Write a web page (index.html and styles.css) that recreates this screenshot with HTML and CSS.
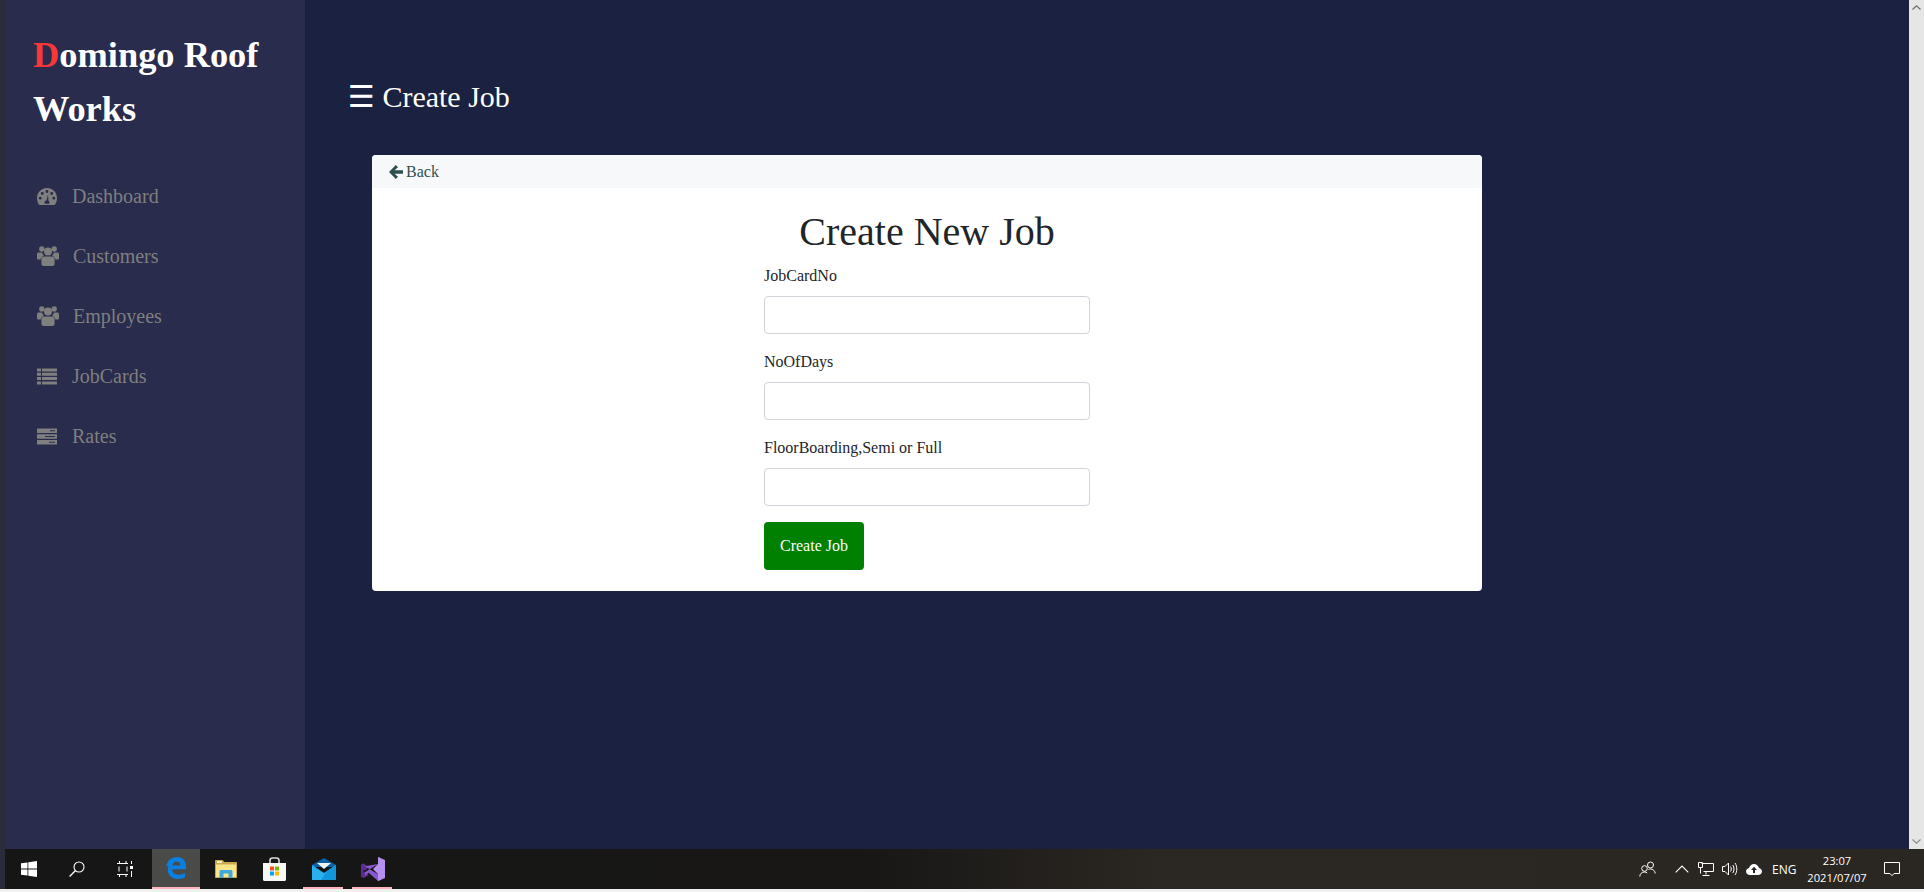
FILE: index.html
```html
<!DOCTYPE html>
<html lang="en">
<head>
<meta charset="utf-8">
<title>Create Job</title>
<link rel="stylesheet" href="styles.css">
</head>
<body>
<div class="screen">
  <div class="edge"></div>
  <div class="window">
    <div class="app">
      <aside class="sidebar">
        <h3 class="brand"><span class="brand-d">D</span>omingo Roof Works</h3>
        <ul class="nav">
          <li class="nav-item"><svg class="nav-icon" viewBox="0 0 20 17"><path fill-rule="evenodd" d="M10 0C4.500 0 0 4.400 0 10c0 2.600.8 5 1.900 6.500.2.300.5.500.9.500h14.400c.4 0 .7-.2.900-.5C19.200 15 20 12.600 20 10c0-5.600-4.500-10-10-10zM10 2a1.400 1.400 0 1 1 0 2.900A1.400 1.400 0 0 1 10 2zM5.300 4a1.400 1.400 0 1 1 0 2.900 1.400 1.400 0 0 1 0-2.900zm9.400 0a1.400 1.400 0 1 1 0 2.900 1.400 1.400 0 0 1 0-2.900zM3.200 8.700a1.400 1.400 0 1 1 0 2.900 1.400 1.400 0 0 1 0-2.900zm13.600 0a1.400 1.400 0 1 1 0 2.900 1.400 1.400 0 0 1 0-2.900zM11 6.500l.5 6.200c.7.400 1 1 1 1.700 0 .5-.2 1-.5 1.300H8c-.3-.3-.5-.8-.5-1.300 0-1.100.9-2 2-2z"/></svg><span class="nav-label">Dashboard</span></li>
          <li class="nav-item"><svg class="nav-icon nav-icon-users" viewBox="0 0 22 20"><circle cx="4.800" cy="3" r="2.700"/><circle cx="17.200" cy="3" r="2.700"/><circle cx="11" cy="5.600" r="4"/><path d="M0 8.200c0-1 .7-1.700 1.800-1.700H5c.3 1.300 1 2.400 2 3.200-1.800.6-3 2-3.400 3.800H1.500C.5 13.500 0 13 0 12zM22 8.200c0-1-.7-1.700-1.800-1.700H17c-.3 1.300-1 2.400-2 3.200 1.800.6 3 2 3.400 3.800h2.100c1 0 1.500-.5 1.500-1.500zM7 10.600h8c1.500 0 2.600 1.200 2.600 2.800v4.400c0 1.300-.8 2.200-2 2.200H6.400c-1.200 0-2-.9-2-2.200v-4.400c0-1.600 1.100-2.800 2.600-2.800z"/></svg><span class="nav-label">Customers</span></li>
          <li class="nav-item"><svg class="nav-icon nav-icon-users" viewBox="0 0 22 20"><circle cx="4.800" cy="3" r="2.700"/><circle cx="17.200" cy="3" r="2.700"/><circle cx="11" cy="5.600" r="4"/><path d="M0 8.200c0-1 .7-1.700 1.800-1.700H5c.3 1.300 1 2.400 2 3.200-1.800.6-3 2-3.400 3.800H1.500C.5 13.500 0 13 0 12zM22 8.200c0-1-.7-1.700-1.800-1.700H17c-.3 1.300-1 2.400-2 3.200 1.800.6 3 2 3.400 3.800h2.100c1 0 1.500-.5 1.500-1.500zM7 10.600h8c1.500 0 2.600 1.200 2.600 2.800v4.400c0 1.300-.8 2.200-2 2.200H6.400c-1.200 0-2-.9-2-2.200v-4.400c0-1.600 1.100-2.800 2.600-2.800z"/></svg><span class="nav-label">Employees</span></li>
          <li class="nav-item"><svg class="nav-icon" viewBox="0 0 20 16"><path d="M0 0h4v3H0zM5 0h15v3H5zM0 4.300h4v3H0zM5 4.300h15v3H5zM0 8.600h4v3H0zM5 8.600h15v3H5zM0 12.900h4V16H0zM5 12.900h15V16H5z"/></svg><span class="nav-label">JobCards</span></li>
          <li class="nav-item"><svg class="nav-icon" viewBox="0 0 20 16"><path fill-rule="evenodd" d="M0 0h20v4.500H0zM13 1.700v1h5v-1zM0 5.700h20v4.500H0zM8 7.400v1h10v-1zM0 11.500h20V16H0zM12 13.200v1h6v-1z"/></svg><span class="nav-label">Rates</span></li>
        </ul>
      </aside>
      <main class="main">
        <h2 class="page-title"><span class="menu-glyph">☰</span> Create Job</h2>
        <section class="card">
          <div class="card-header"><svg class="back-icon" viewBox="0 0 14 14"><path d="M6.800 0 9 2.200 5.600 5.300H14v3.400H5.600L9 11.800 6.800 14 0 7z"/></svg><span>Back</span></div>
          <form class="card-body">
            <h1 class="form-title">Create New Job</h1>
            <div class="field"><label class="field-label">JobCardNo</label><input class="field-input" type="text"></div>
            <div class="field"><label class="field-label">NoOfDays</label><input class="field-input" type="text"></div>
            <div class="field"><label class="field-label">FloorBoarding,Semi or Full</label><input class="field-input" type="text"></div>
            <button class="submit" type="button">Create Job</button>
          </form>
        </section>
      </main>
      <div class="scrollbar">
        <svg class="scroll-arrow" viewBox="0 0 9 5"><path d="M.5 4.500 4.500.8l4 3.700" fill="none" stroke="#6f6f6f" stroke-width="1.200"/></svg>
        <svg class="scroll-arrow" viewBox="0 0 9 5"><path d="M.5.500 4.500 4.200l4-3.700" fill="none" stroke="#8c8c8c" stroke-width="1.200"/></svg>
      </div>
    </div>
    <footer class="taskbar">
      <div class="sys-btn"><svg class="tb-icon" viewBox="0 0 16 16"><path fill="#fff" d="M0 2.300 6.500 1.400v6.200H0zM7.300 1.300 16 0v7.600H7.300zM0 8.400h6.500v6.200L0 13.700zM7.300 8.400H16V16l-8.700-1.300z"/></svg></div>
      <div class="sys-btn"><svg class="tb-icon" viewBox="0 0 16 16"><circle cx="10" cy="6" r="5" fill="none" stroke="#fff" stroke-width="1.100"/><path d="M6.500 9.500.6 15.500" stroke="#fff" stroke-width="1.300"/></svg></div>
      <div class="sys-btn sys-btn-last"><svg class="tb-icon" viewBox="0 0 16 16"><path d="M0 2.500h11M0 13.500h11" fill="none" stroke="#fff"/><path d="M2.500 0v2.500M9 0v2.500M2.500 13.500V16M9 13.500V16M2 5.500v5M10 5.500v5" stroke="#fff" fill="none"/><path fill="#fff" d="M13 5h3v3h-3zM14 0h1v3h-1zM14 10h1v6h-1z"/></svg></div>
      <div class="pin pin-active"><svg class="pin-icon pin-icon-edge" viewBox="0 0 20 22"><path fill="#0a7fe0" d="M.3 9.200C1.200 3.600 5.400 0 11 0c5.600 0 9 3.800 9 9.700v2.600H6.200c.1 3.600 2.800 5.400 6.200 5.400 2.500 0 4.800-.7 6.600-1.900v4.500c-1.700 1-4.600 1.700-7.300 1.700C5.400 22 1.800 17.800 1.800 12.800c0-1.400.2-2.500.7-3.500C1.700 9.400 1 9.300.3 9.200zM6.400 8.600h8c0-2.500-1.500-4.200-3.800-4.200-2.200 0-3.800 1.800-4.200 4.200z"/></svg></div>
      <div class="pin"><svg class="pin-icon pin-icon-folder" viewBox="0 0 22 18"><path fill="#c9a94e" d="M0 1c0-.6.400-1 1-1h6.500l2 2H21c.6 0 1 .4 1 1v14c0 .6-.4 1-1 1H1c-.6 0-1-.4-1-1z"/><path fill="#fde58a" d="M1 4.500h20V17H1z"/><path fill="#f6f0cf" d="M2 1h5v2H2z"/><path fill="#3fa9dc" d="M4.500 18v-6.500c0-.8.500-1.500 1.500-1.500h10c1 0 1.500.7 1.500 1.500V18h-4v-4.500h-5V18z"/></svg></div>
      <div class="pin"><svg class="pin-icon pin-icon-store" viewBox="0 0 23 24"><path fill="none" stroke="#d8d8d8" stroke-width="1.600" d="M7 8V3.500C7 2 8 1 9.500 1h4C15 1 16 2 16 3.500V8"/><path fill="#f7f7f7" d="M0 6h23v16.500c0 .9-.6 1.500-1.500 1.500h-20C.6 24 0 23.400 0 22.500z"/><path fill="#f25022" d="M7 9.500h4v4H7z"/><path fill="#7fba00" d="M12 9.500h4v4h-4z"/><path fill="#00a4ef" d="M7 14.500h4v4H7z"/><path fill="#ffb900" d="M12 14.500h4v4h-4z"/></svg></div>
      <div class="pin pin-open"><svg class="pin-icon pin-icon-mail" viewBox="0 0 24 22"><path fill="#0a62a8" d="M12 0 24 7v2H0V7z"/><path fill="#f2f2f2" d="M5 5h14l-7 6z"/><path fill="#29b1ef" d="M0 7 12 15 24 7v15H0z"/><path fill="#1295db" d="M24 22H9L15 13l9-6z"/></svg></div>
      <div class="pin pin-open"><svg class="pin-icon pin-icon-vs" viewBox="0 0 24 24"><path fill="#5c2d91" d="M0 7.500 2.500 6.300l5.200 3.900-3.800 3.600-1.400-1.300v3.300l1.400-1.200 3.800 3.700-5.200 2.800L0 19.800z"/><path fill="#8758cf" d="M17 0l3 1.300V22.700L17 24 7.700 15.700 3.900 18.800 3.900 15.300 17 7V0zM3.900 9.300l13.100 8V7z"/><path fill="#b78fee" d="M17 0l7 3v18l-7 3V17l-5-5 5-5z"/></svg></div>
      <div class="tray">
        <svg class="tray-people" viewBox="0 0 17 16"><circle cx="11.500" cy="4" r="3" fill="none" stroke="#fff"/><circle cx="5.500" cy="7.500" r="2.800" fill="none" stroke="#fff"/><path d="M.8 15.500c0-2.500 2-4.500 4.700-4.500 1 0 2 .3 2.700 1M9.500 8.500c.6-.3 1.300-.5 2-.5 2.500 0 4.700 2 4.700 4.500" fill="none" stroke="#fff"/></svg>
        <svg class="tray-chevron" viewBox="0 0 14 8"><path d="M.7 7.300 7 1l6.300 6.300" fill="none" stroke="#fff" stroke-width="1.100"/></svg>
        <svg class="tray-net" viewBox="0 0 16 14"><path d="M3.500 1.500h12v8H5.500M8 9.500v3M4.500 13.500h7" fill="none" stroke="#fff"/><path d="M.5.500h4v5h-4zM2.500 5.500v6" fill="none" stroke="#fff"/></svg>
        <svg class="tray-vol" viewBox="0 0 16 14"><path d="M.5 4.500h2.500L6.500 1v12L3 9.500H.5z" fill="none" stroke="#fff"/><path d="M8.500 4.500c1 1.500 1 3.500 0 5M10.800 3c1.600 2.400 1.600 5.600 0 8M13 1c2.400 3.600 2.400 8.400 0 12" fill="none" stroke="#fff"/></svg>
        <svg class="tray-cloud" viewBox="0 0 16 11"><path fill="#fff" fill-rule="evenodd" d="M4 11C1.800 11 0 9.500 0 7.500 0 5.700 1.300 4.400 3 4.100 3.600 1.700 5.600 0 8 0s4.500 1.700 5 4.100c1.700.3 3 1.600 3 3.400 0 2-1.800 3.500-4 3.500zM8 2.800 5 6h2v3h2V6h2z"/></svg>
        <span class="tray-lang">ENG</span>
        <div class="clock"><span>23:07</span><span>2021/07/07</span></div>
        <svg class="tray-notify" viewBox="0 0 16 15"><path d="M.5.500h15v11H10l-2 2.200L6 11.500H.5z" fill="none" stroke="#fff"/></svg>
      </div>
    </footer>
  </div>
</div>
<div class="bottom-strip"></div>
</body>
</html>
```

FILE: styles.css
```css
* { box-sizing: border-box; }
html, body { margin: 0; padding: 0; height: 100%; overflow: hidden; }
body {
  display: flex;
  flex-direction: column;
  font-family: "Liberation Serif", "Times New Roman", serif;
  background: #f0f0f0;
}
.screen { display: flex; height: 889px; }
.edge { width: 5px; background: #2a2d39; }
.window { flex: 1; display: flex; flex-direction: column; min-width: 0; }
.app { display: flex; height: 849px; }
.bottom-strip { height: 3px; background: #f0f0f0; }

.sidebar { width: 300px; background: #292c4c; padding: 28px 28px 0; flex: none; }
.brand {
  margin: 0;
  font-size: 36.4px;
  line-height: 54px;
  font-weight: 700;
  color: #fff;
}
.brand-d { color: #f83838; }
.nav { list-style: none; margin: 30px 0 0; padding: 0; }
.nav-item { display: flex; align-items: center; height: 60px; padding-left: 4px; color: #7f7f7f; font-size: 20px; }
.nav-item svg { fill: #7f7f7f; }
.nav-icon { width: 20px; height: 17px; flex: none; margin-right: 15px; }
.nav-icon-users { width: 22px; height: 20px; margin-right: 14px; }

.main { flex: 1; min-width: 0; background: #1b2140; padding: 79px 0 0 43px; }
.page-title { margin: 0; font-size: 30px; line-height: 36px; font-weight: 400; color: #fff; }
.menu-glyph { font-family: "DejaVu Sans", sans-serif; font-size: 30px; }
.card {
  margin: 40px 0 0 24px;
  width: 1110px;
  height: 436px;
  background: #fff;
  border-radius: 4px;
  overflow: hidden;
}
.card-header {
  display: flex;
  align-items: center;
  gap: 3px;
  height: 33px;
  padding: 1px 0 0 17px;
  background: #f7f8fa;
  color: #2f4f4f;
  font-size: 16px;
}
.back-icon { width: 14px; height: 14px; fill: #2f4f4f; }
.card-body { width: 326px; margin: 0 auto; }
.form-title {
  margin: 20px 0 8px;
  font-size: 40px;
  line-height: 48px;
  font-weight: 400;
  text-align: center;
  color: #212529;
}
.field { margin-bottom: 16px; }
.field-label { display: block; font-size: 16px; line-height: 24px; margin-bottom: 8px; color: #212529; }
.field-input {
  display: block;
  width: 100%;
  height: 38px;
  border: 1px solid #ced4da;
  border-radius: 4px;
  background: #fff;
}
.submit {
  display: block;
  width: 100px;
  height: 48px;
  margin-top: 0;
  border: 0;
  border-radius: 4px;
  background: #008000;
  color: #fff;
  font-family: inherit;
  font-size: 16px;
}

.scrollbar {
  width: 15px;
  flex: none;
  background: #e6e6e6;
  display: flex;
  flex-direction: column;
  justify-content: space-between;
  align-items: center;
  padding: 5px 0;
}
.scroll-arrow { width: 9px; height: 5px; }

.taskbar {
  display: flex;
  align-items: stretch;
  height: 40px;
  background: linear-gradient(90deg, #161616 0%, #181716 45%, #2b2722 60%, #2a2622 100%);
}
.sys-btn { width: 48px; display: flex; align-items: center; justify-content: center; }
.sys-btn-last { margin-right: 3px; }
.tb-icon { width: 16px; height: 16px; }
.pin { width: 49px; display: flex; align-items: center; justify-content: center; position: relative; padding-bottom: 1px; }
.pin-active { background: #4a4a48; width: 48px; margin-right: 1px; border-bottom: 2px solid #ffb3ba; padding-bottom: 0; }
.pin-open::after {
  content: "";
  position: absolute;
  left: 4px;
  right: 5px;
  bottom: 0;
  height: 2px;
  background: #ffb3ba;
}
.pin-icon { display: block; }
.pin-icon-edge { width: 20px; height: 22px; }
.pin-icon-folder { width: 22px; height: 18px; }
.pin-icon-store { width: 23px; height: 24px; }
.pin-icon-mail { width: 24px; height: 22px; }
.pin-icon-vs { width: 24px; height: 24px; }
.tray { margin-left: auto; display: flex; align-items: center; color: #fff; padding-right: 24px; font-family: "Open Sans", "Noto Sans", sans-serif; }
.tray-people { width: 17px; height: 16px; margin-right: 19px; }
.tray-chevron { width: 14px; height: 8px; margin-right: 9px; }
.tray-net { width: 16px; height: 14px; margin-right: 8px; }
.tray-vol { width: 16px; height: 14px; margin-right: 8px; }
.tray-cloud { width: 16px; height: 11px; margin-right: 10px; }
.tray-lang { font-size: 12px; width: 23px; margin-right: 9px; }
.clock { display: flex; flex-direction: column; align-items: center; width: 66px; font-size: 11.2px; line-height: 17px; margin-right: 14px; }
.tray-notify { width: 16px; height: 15px; }
```
